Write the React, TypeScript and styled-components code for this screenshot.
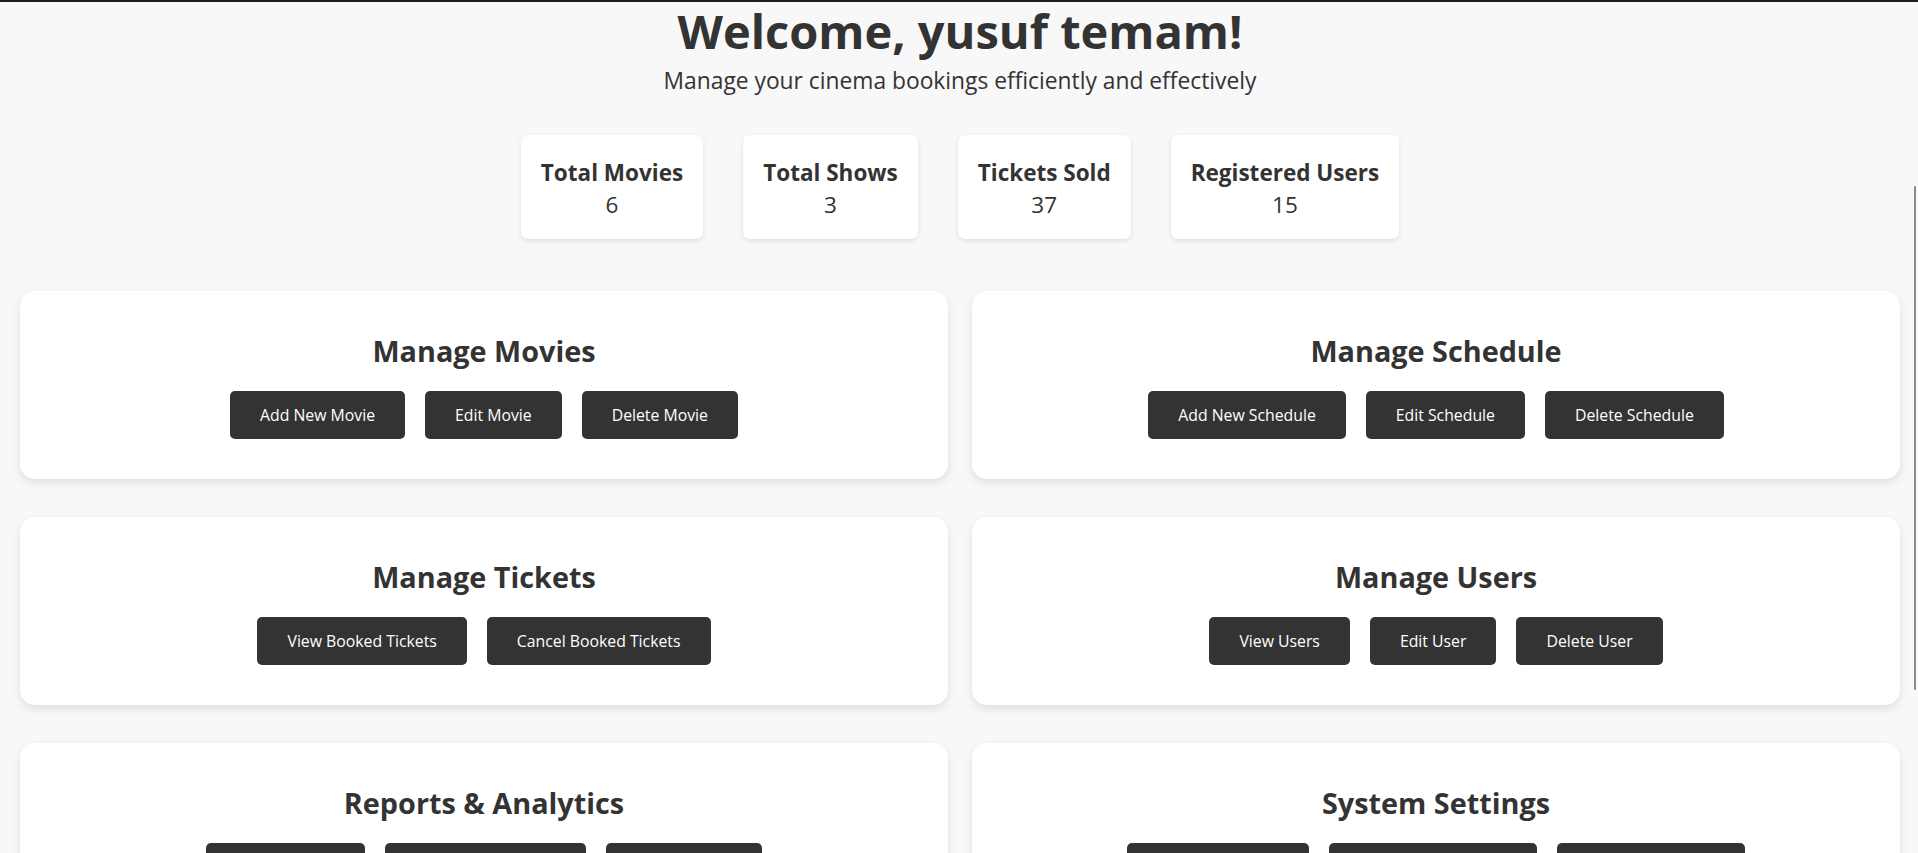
import React from "react";
import styled, { createGlobalStyle } from "styled-components";

const GlobalStyle = createGlobalStyle`
  html, body {
    margin: 0;
    padding: 0;
    overflow: hidden;
    background: #f8f8f8;
  }
  body {
    font-family: "Open Sans", "Noto Sans", "Liberation Sans", sans-serif;
    color: #333;
  }
  * { box-sizing: border-box; }
`;

const TopRule = styled.div`
  height: 2px;
  background: #1c1c1c;
`;

const Page = styled.main`
  padding: 0 0 0 2px;
`;

const Hero = styled.header`
  display: flex;
  flex-direction: column;
  align-items: center;
  text-align: center;
`;

const Title = styled.h1`
  margin: 0;
  font-size: 47px;
  line-height: 59px;
  font-weight: 700;
  color: #333;
`;

const Subtitle = styled.p`
  margin: 6px 0 0;
  font-size: 22.8px;
  line-height: 28px;
  color: #333;
`;

const StatsRow = styled.section`
  display: flex;
  justify-content: center;
  gap: 40px;
  margin-top: 40px;
`;

const StatCard = styled.div`
  background: #fff;
  border-radius: 7px;
  box-shadow: 0 2px 5px rgba(0, 0, 0, 0.1);
  padding: 22px 20px 18px;
  text-align: center;
`;

const StatLabel = styled.div`
  font-size: 22.5px;
  line-height: 32px;
  font-weight: 700;
`;

const StatValue = styled.div`
  font-size: 22.5px;
  line-height: 32px;
`;

const Sections = styled.section`
  display: grid;
  grid-template-columns: 1fr 1fr;
  gap: 38px 24px;
  padding: 0 18px;
  margin-top: 52px;
`;

const Card = styled.div`
  background: #fff;
  border-radius: 15px;
  box-shadow: 0 4px 8px rgba(0, 0, 0, 0.1);
  padding: 40px 20px;
  text-align: center;
`;

const CardTitle = styled.h2`
  margin: 0 0 20px;
  font-size: 28.8px;
  line-height: 40px;
  font-weight: 700;
  color: #333;
`;

const ButtonRow = styled.div`
  display: flex;
  justify-content: center;
  gap: 20px;
`;

const ActionButton = styled.button`
  font-family: inherit;
  font-size: 15.8px;
  line-height: 24px;
  padding: 12px 30px;
  border: none;
  border-radius: 5px;
  background: #333;
  color: #fff;
  cursor: pointer;
`;

const ScrollThumb = styled.div`
  position: fixed;
  top: 186px;
  right: 2px;
  width: 2px;
  height: 504px;
  border-radius: 1px;
  background: #8c8c8c;
`;

const stats = [
  { label: "Total Movies", value: 6 },
  { label: "Total Shows", value: 3 },
  { label: "Tickets Sold", value: 37 },
  { label: "Registered Users", value: 15 },
];

const sections = [
  { title: "Manage Movies", actions: ["Add New Movie", "Edit Movie", "Delete Movie"] },
  { title: "Manage Schedule", actions: ["Add New Schedule", "Edit Schedule", "Delete Schedule"] },
  { title: "Manage Tickets", actions: ["View Booked Tickets", "Cancel Booked Tickets"] },
  { title: "Manage Users", actions: ["View Users", "Edit User", "Delete User"] },
  { title: "Reports & Analytics", actions: ["Sales Reports", "Customer Analytics", "View Reports"] },
  { title: "System Settings", actions: ["Account Settings", "Notification Settings", "Payment Settings"] },
];

export default function App() {
  return (
    <>
      <GlobalStyle />
      <TopRule />
      <Page>
        <Hero>
          <Title>Welcome, yusuf temam!</Title>
          <Subtitle>Manage your cinema bookings efficiently and effectively</Subtitle>
        </Hero>
        <StatsRow>
          {stats.map((s) => (
            <StatCard key={s.label}>
              <StatLabel>{s.label}</StatLabel>
              <StatValue>{s.value}</StatValue>
            </StatCard>
          ))}
        </StatsRow>
        <Sections>
          {sections.map((sec) => (
            <Card key={sec.title}>
              <CardTitle>{sec.title}</CardTitle>
              <ButtonRow>
                {sec.actions.map((a) => (
                  <ActionButton key={a}>{a}</ActionButton>
                ))}
              </ButtonRow>
            </Card>
          ))}
        </Sections>
      </Page>
      <ScrollThumb />
    </>
  );
}
